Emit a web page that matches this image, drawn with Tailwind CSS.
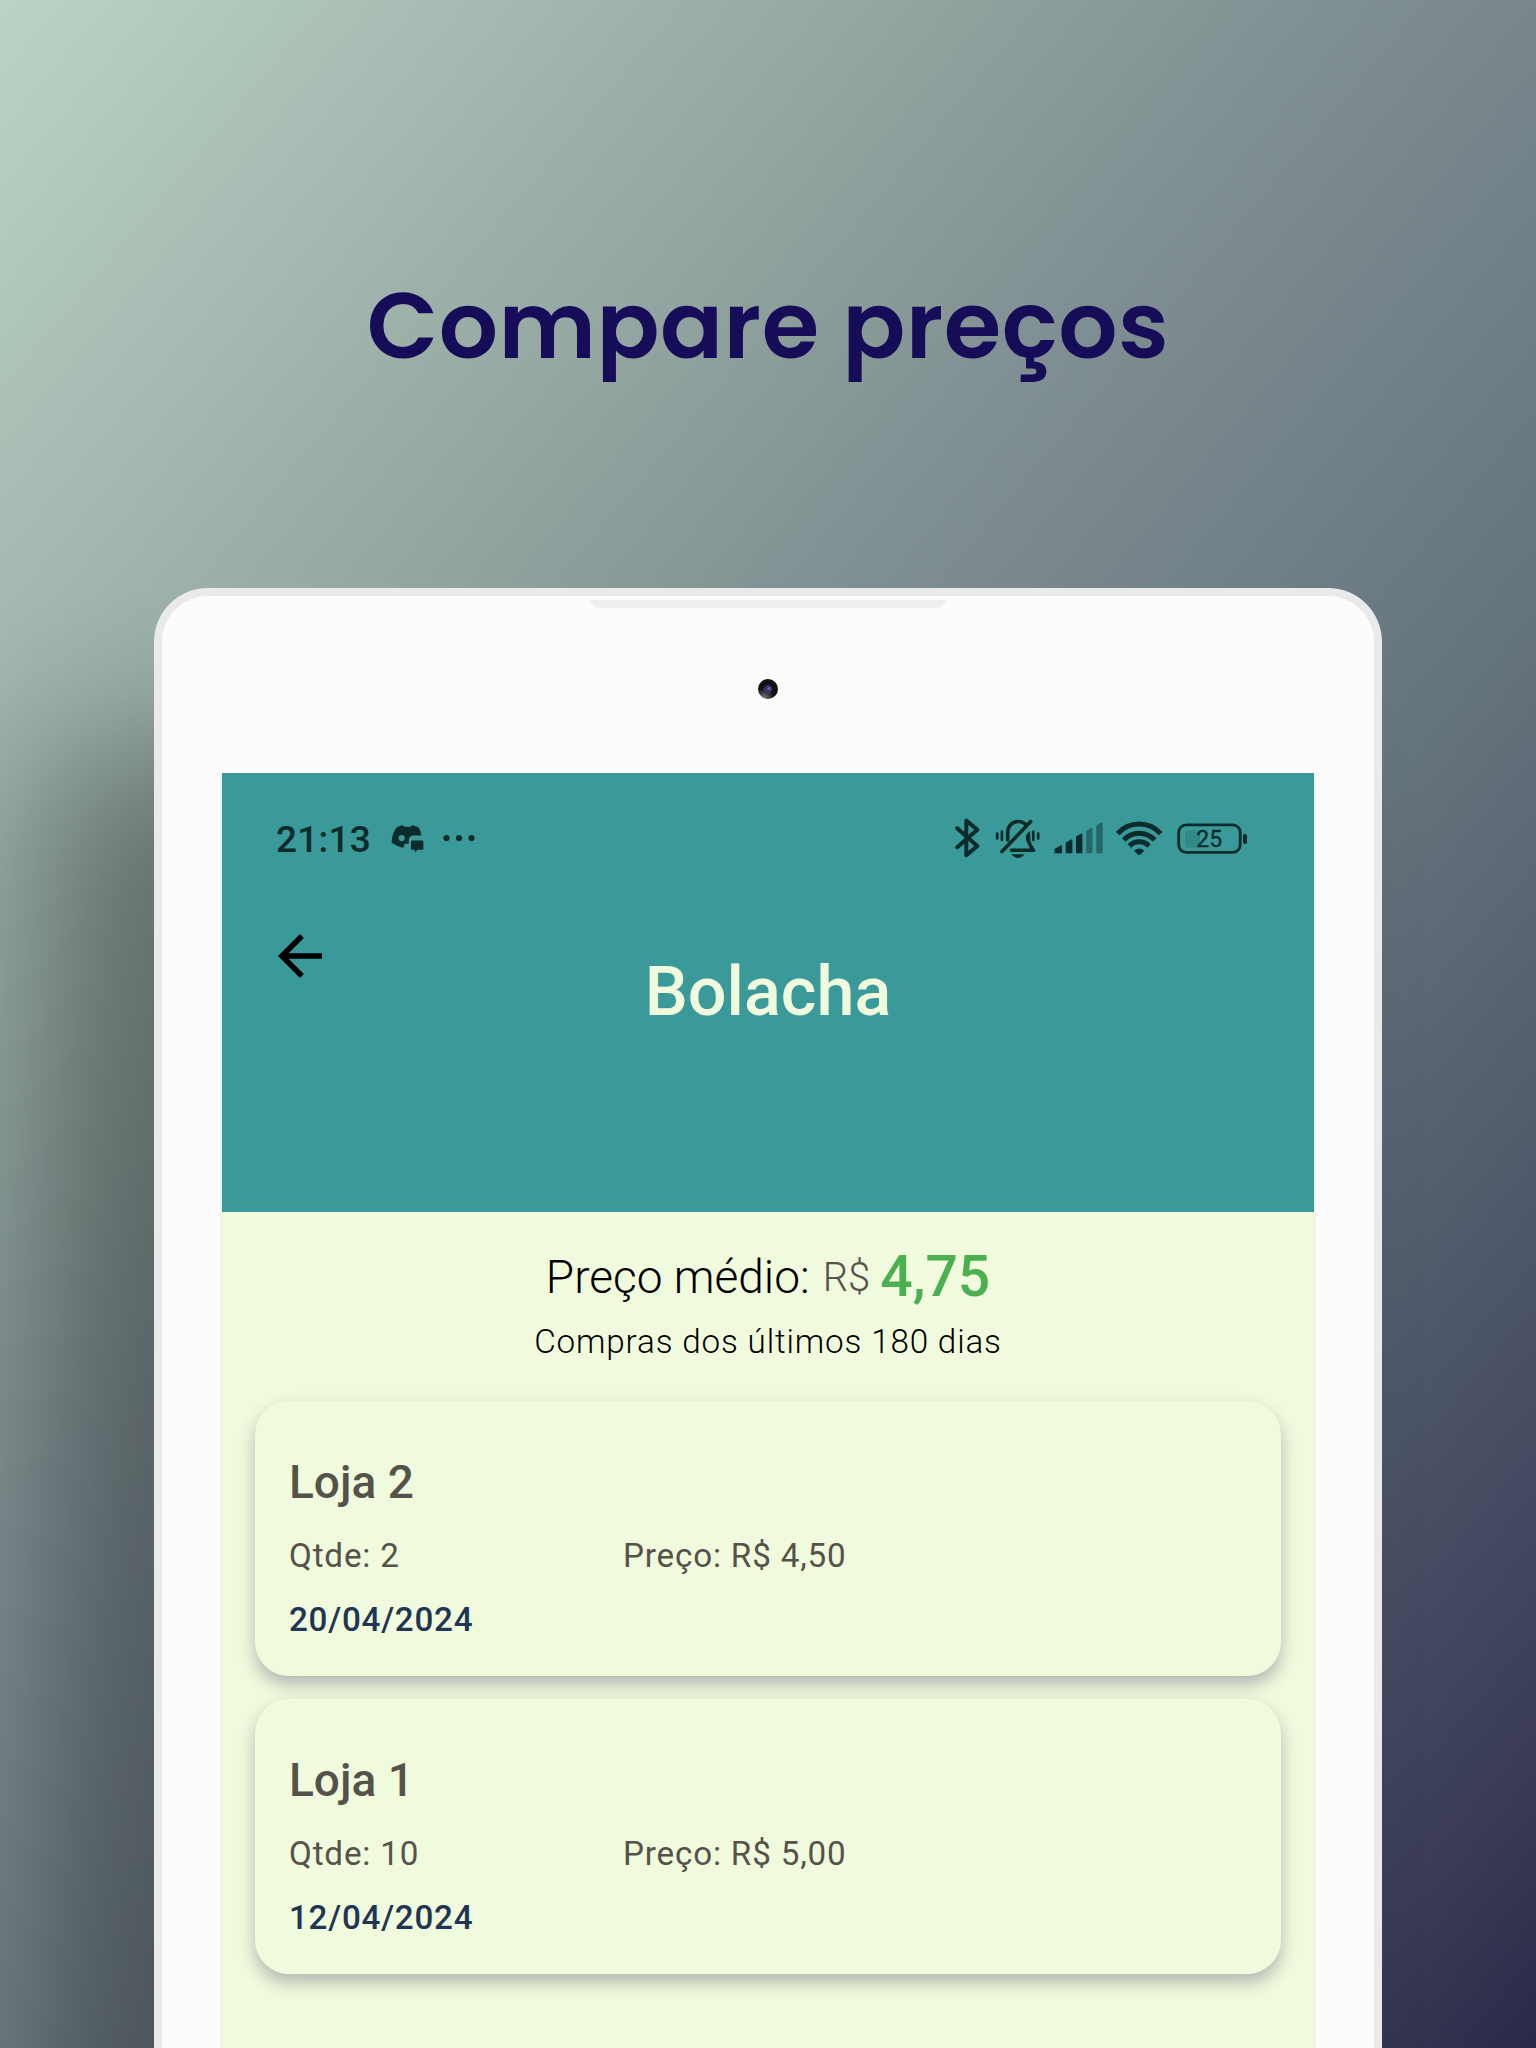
<!DOCTYPE html>
<html lang="pt-BR">
<head>
<meta charset="utf-8">
<title>Compare preços</title>
<script src="https://cdn.jsdelivr.net/npm/@tailwindcss/browser@4"></script>
</head>
<body class="font-['Roboto',sans-serif]">
<main class="flex h-[2048px] w-[1536px] flex-col items-center overflow-hidden bg-[linear-gradient(130deg,#bbd3c5_0%,#869795_36.5%,#829195_39.5%,#65737c_63%,#4f586a_78%,#3a3c58_92%,#292a47_100%)]">
  <h1 class="mt-[256px] h-[140px] shrink-0 whitespace-nowrap font-['Poppins','Inter',sans-serif] text-[93px] leading-[140px] font-semibold tracking-[0.5px] text-[#160c58]">Compare preços</h1>

  <!-- Tablet -->
  <section class="mt-[192px] flex h-[1600px] w-[1228px] shrink-0 flex-col items-center rounded-t-[54px] border-8 border-b-0 border-[#eaeaea] bg-[#fcfcfc] shadow-[-115px_160px_150px_0px_rgba(0,0,0,0.31)]">
    <svg class="mt-1 h-2 w-[356px]" viewBox="0 0 356 8"><path d="M0 0H356Q352 8 347 8H9Q4 8 0 0Z" fill="#eeeeee"/></svg>
    <svg class="mt-[71px] size-5" viewBox="0 0 20 20">
      <defs><radialGradient id="lens" cx=".3" cy=".95" r=".5"><stop offset="0" stop-color="#777"/><stop offset="1" stop-color="#111"/></radialGradient></defs>
      <circle cx="10" cy="10" r="10" fill="url(#lens)"/><circle cx="10" cy="10.3" r="4.2" fill="#34366b"/><circle cx="10.8" cy="9.4" r="1.5" fill="#6469a8"/>
    </svg>

    <!-- Screen -->
    <div class="mt-[74px] flex w-[1096px] grow flex-col border-x-2 border-[#f1f2f1] bg-[#f0fadc]">
      <header class="h-[439px] bg-[#399a99] px-[45px] pt-[43px]">
        <div class="flex h-11 items-center pr-[22px] pl-[9px] text-[#0d2b2b]">
          <span class="mt-[3px] w-[94px] text-[37px] leading-[44px] font-medium tracking-[0.2px] whitespace-nowrap">21:13</span>
          <svg class="ml-[21px] h-[29px] w-[33px]" viewBox="0 0 33 29" fill="currentColor">
            <path fill-rule="evenodd" d="M.7 18.5C.9 12 3 6.500 6 3.300L11.500 1l2 1.700h6L21.500 1l5.800 2.300C28.800 5.500 30 8 30.400 11.500H22c-1 0-1.600.3-2.200.8a3.400 3.400 0 0 0-2 3.200v4.200l-5.300.3 1.300 1-1.800 2.700C7.500 22.500 3 20.800.7 18.500ZM10.700 11a3 3 0 1 0 0 6.200 3 3 0 0 0 0-6.200Z"/>
            <path d="M21 16.500H31.500Q32.300 16.500 32.300 17.300V25Q32.300 25.800 31.500 25.800H26.500L24 28.500V25.800H21Q20 25.800 20 25V17.300Q20 16.500 21 16.500Z"/>
          </svg>
          <svg class="ml-[19px] h-2 w-[32px]" viewBox="0 0 32 8" fill="currentColor"><circle cx="3.500" cy="4" r="3.100"/><circle cx="16" cy="4" r="3.100"/><circle cx="28.500" cy="4" r="3.100"/></svg>
          <svg class="ml-auto h-[40px] w-[25px]" viewBox="0 0 25 40" fill="none" stroke="currentColor" stroke-width="4" stroke-linecap="round" stroke-linejoin="round"><path d="M2.200 10.200 22.300 28 11.300 37.200V2.500L22.300 11.800 2.200 29.300"/></svg>
          <svg class="ml-[15px] h-[41px] w-[46px]" viewBox="0 0 46 41" fill="none" stroke="currentColor" stroke-width="3.600" stroke-linecap="round" stroke-linejoin="round">
            <path d="M2.200 15.500V20.500M6.900 13.500V22M38.300 13.500V22M43.200 15.500V20.500" stroke-width="2.700"/>
            <path d="M7 33.500 35.700 3.500"/><path d="M12.700 22V14.500C12.700 8 17.500 3.500 23.300 3.500 26.500 3.500 28.500 4.500 30.500 6.200"/>
            <path d="M33.500 16.500V20.500C33.500 25.500 35 28 38.500 32.300H16.500"/>
            <path d="M34.500 14 31.500 18V22.500L33.500 25Z" fill="currentColor" stroke-width="1"/>
            <path d="M16.500 36.300H29.500C27.500 38.800 25.500 40 23 40S18.500 38.800 16.500 36.300Z" fill="currentColor" stroke="none"/>
          </svg>
          <svg class="ml-[13px] h-[32px] w-[49px]" viewBox="0 0 49 32" fill="currentColor">
            <path d="M.5 27 7 23.200Q8 23 8 24V31.300H1.500Q.5 31.300.5 30.300ZM11.700 20.500 17.300 17.500Q18.400 17.300 18.400 18.500V31.300H12.700Q11.700 31.300 11.700 30.300ZM22 14.500 27.300 11.500Q28.400 11.300 28.400 12.500V31.300H23Q22 31.300 22 30.300Z"/>
            <path opacity=".45" d="M32.200 9 37.300 5.700Q38.400 5.300 38.400 6.500V31.300H33.200Q32.200 31.300 32.200 30.300ZM42.300 3.500 47.600.2Q48.700 0 48.700 1V31.300H43.300Q42.300 31.300 42.300 30.300Z"/>
          </svg>
          <svg class="ml-[13px] h-[35px] w-[47px]" viewBox="0 0 47 35" fill="none" stroke="currentColor" stroke-width="5">
            <path d="M1.700 12.600A29 29 0 0 1 44.700 12.600M7.700 19A21 21 0 0 1 38.700 19M13.400 25A13.500 13.500 0 0 1 33 25"/>
            <path d="M18 29.700Q23.200 25.500 28.400 29.700L24.200 33.700Q23.200 34.500 22.200 33.700Z" fill="currentColor" stroke="none"/>
          </svg>
          <svg class="ml-[14px] h-[31px] w-[70px]" viewBox="0 0 70 31">
            <rect x="1.700" y="1.900" width="61.500" height="27.500" rx="7.500" fill="none" stroke="currentColor" stroke-width="2.800"/>
            <rect x="8" y="7" width="15" height="17.700" rx="3" fill="#31898a"/>
            <rect x="66" y="11" width="4" height="10" rx="1.800" fill="currentColor"/>
            <text x="19.300" y="24.400" font-size="23" fill="currentColor" stroke="currentColor" stroke-width=".3">25</text>
          </svg>
        </div>
        <div class="mt-[63px] grid grid-cols-[66px_1fr_66px]">
          <svg class="size-[66px]" viewBox="0 0 24 24" fill="#000"><path d="M20 11H7.830l5.590-5.590L12 4l-8 8 8 8 1.410-1.410L7.830 13H20v-2z"/></svg>
          <h2 class="mt-[27px] text-center text-[68.300px] leading-[84px] font-medium text-[#f0fadc]">Bolacha</h2>
        </div>
      </header>

      <div class="flex flex-col px-[33px] pt-[31px]">
        <div class="flex h-[68px] items-center justify-center">
          <span class="text-[46px] font-light text-black">Preço médio:</span>
          <span class="mt-px ml-[13px] text-[40px] font-light text-[#55524a]">R$</span>
          <span class="ml-[10px] text-[57px] font-medium text-[#4caf50]">4,75</span>
        </div>
        <p class="mt-[9px] text-center text-[33.200px] leading-[44px] font-light tracking-[0.850px] text-black">Compras dos últimos 180 dias</p>

        <article class="mt-[37px] h-[275px] rounded-[34px] bg-[#f0fadc] px-[34px] pt-[51px] shadow-[0_9px_14px_-1px_rgba(80,70,110,0.24),0_8px_20px_rgba(80,70,110,0.16)]">
          <h3 class="text-[46px] leading-[60px] font-medium text-[#55524a]">Loja 2</h3>
          <div class="mt-5 grid grid-cols-[334px_1fr] text-[33.200px] leading-[48px] tracking-[0.830px] text-[#55524a]"><span>Qtde: 2</span><span>Preço: R$ 4,50</span></div>
          <p class="mt-4 text-[33.200px] leading-[48px] font-medium tracking-[0.750px] text-[#1e3553]">20/04/2024</p>
        </article>
        <article class="mt-[23px] h-[275px] rounded-[34px] bg-[#f0fadc] px-[34px] pt-[51px] shadow-[0_9px_14px_-1px_rgba(80,70,110,0.24),0_8px_20px_rgba(80,70,110,0.16)]">
          <h3 class="text-[46px] leading-[60px] font-medium text-[#55524a]">Loja 1</h3>
          <div class="mt-5 grid grid-cols-[334px_1fr] text-[33.200px] leading-[48px] tracking-[0.830px] text-[#55524a]"><span>Qtde: 10</span><span>Preço: R$ 5,00</span></div>
          <p class="mt-4 text-[33.200px] leading-[48px] font-medium tracking-[0.750px] text-[#1e3553]">12/04/2024</p>
        </article>
      </div>
    </div>
  </section>
</main>
</body>
</html>
